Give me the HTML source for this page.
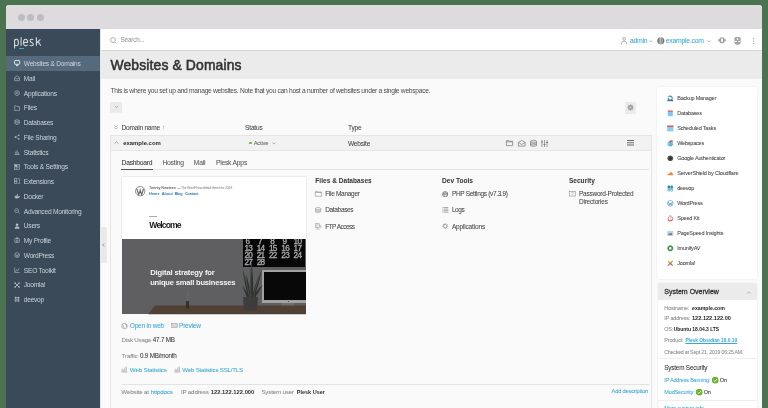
<!DOCTYPE html>
<html><head><meta charset="utf-8"><style>
html,body{margin:0;padding:0;}
body{width:768px;height:408px;overflow:hidden;position:relative;background:#4b7350;font-family:"Liberation Sans",sans-serif;}
.t{position:absolute;line-height:1;white-space:nowrap;-webkit-text-stroke:0.05px currentColor;filter:blur(0.3px);}
.r{position:absolute;}
svg{position:absolute;overflow:visible;}
</style></head><body>
<div class="r" style="left:6px;top:5px;width:756px;height:403px;background:#fafafa;border-radius:3px 3px 0 0;"></div>
<div class="r" style="left:6px;top:5px;width:756px;height:24px;background:#dddbdd;border-radius:3px 3px 0 0;"></div>
<div class="r" style="left:17.9px;top:13.5px;width:7px;height:7px;background:#bdbcbe;border-radius:50%;"></div>
<div class="r" style="left:27.2px;top:13.5px;width:7px;height:7px;background:#bdbcbe;border-radius:50%;"></div>
<div class="r" style="left:36.5px;top:13.5px;width:7px;height:7px;background:#bdbcbe;border-radius:50%;"></div>
<div class="r" style="left:6px;top:29px;width:94px;height:379px;background:#3a4a59;"></div>
<svg style="left:0;top:0;filter:blur(0.2px)" width="50" height="50" viewBox="0 0 50 50"><g fill="none" stroke="#d9dee3" stroke-width="1.05"><path d="M14.6,48.6 V39.4"/><path d="M14.6,40.5 C15.1,39.7 15.9,39.3 16.6,39.3 C17.8,39.3 18.4,40.6 18.4,42.5 C18.4,44.5 17.7,45.8 16.5,45.8 C15.8,45.8 15.1,45.4 14.6,44.7"/><path d="M21.1,37.2 V45.8"/><path d="M23.6,42.5 H27.6 C27.6,40.4 26.9,39.3 25.6,39.3 C24.3,39.3 23.5,40.6 23.5,42.6 C23.5,44.6 24.3,45.8 25.7,45.8 C26.6,45.8 27.2,45.4 27.6,44.8"/><path d="M33.1,39.9 C32.7,39.5 32.1,39.3 31.5,39.3 C30.6,39.3 30.0,39.9 30.0,40.8 C30.0,42.7 33.3,42.2 33.3,44.2 C33.3,45.2 32.6,45.8 31.5,45.8 C30.8,45.8 30.1,45.5 29.7,45.0"/><path d="M36.4,37.2 V45.8 M40.4,39.4 L36.6,43.0 M38.1,41.6 L40.8,45.8"/></g></svg>
<div class="r" style="left:18.7px;top:47.9px;width:5.1px;height:1px;background:#3fa9d0;"></div>
<div class="r" style="left:6px;top:56px;width:94px;height:15px;background:#566a7e;"></div>
<div class="t" style="left:23.80px;top:61.00px;font-size:6.642px;color:#cad2d9;letter-spacing:-0.253px;-webkit-text-stroke:0;">Websites &amp; Domains</div>
<div class="t" style="left:23.80px;top:76.00px;font-size:6.642px;color:#cad2d9;letter-spacing:-0.226px;-webkit-text-stroke:0;">Mail</div>
<div class="t" style="left:23.80px;top:91.00px;font-size:6.642px;color:#cad2d9;letter-spacing:-0.221px;-webkit-text-stroke:0;">Applications</div>
<div class="t" style="left:23.80px;top:105.00px;font-size:6.642px;color:#cad2d9;letter-spacing:-0.208px;-webkit-text-stroke:0;">Files</div>
<div class="t" style="left:23.80px;top:120.00px;font-size:6.642px;color:#cad2d9;letter-spacing:-0.261px;-webkit-text-stroke:0;">Databases</div>
<div class="t" style="left:23.80px;top:135.00px;font-size:6.642px;color:#cad2d9;letter-spacing:-0.219px;-webkit-text-stroke:0;">File Sharing</div>
<div class="t" style="left:23.80px;top:150.00px;font-size:6.642px;color:#cad2d9;letter-spacing:-0.197px;-webkit-text-stroke:0;">Statistics</div>
<div class="t" style="left:23.80px;top:164.00px;font-size:6.642px;color:#cad2d9;letter-spacing:-0.220px;-webkit-text-stroke:0;">Tools &amp; Settings</div>
<div class="t" style="left:23.80px;top:179.00px;font-size:6.642px;color:#cad2d9;letter-spacing:-0.241px;-webkit-text-stroke:0;">Extensions</div>
<div class="t" style="left:23.80px;top:194.00px;font-size:6.642px;color:#cad2d9;letter-spacing:-0.260px;-webkit-text-stroke:0;">Docker</div>
<div class="t" style="left:23.80px;top:209.00px;font-size:6.642px;color:#cad2d9;letter-spacing:-0.243px;-webkit-text-stroke:0;">Advanced Monitoring</div>
<div class="t" style="left:23.80px;top:223.00px;font-size:6.642px;color:#cad2d9;letter-spacing:-0.257px;-webkit-text-stroke:0;">Users</div>
<div class="t" style="left:23.80px;top:238.00px;font-size:6.642px;color:#cad2d9;letter-spacing:-0.219px;-webkit-text-stroke:0;">My Profile</div>
<div class="t" style="left:23.80px;top:253.00px;font-size:6.642px;color:#cad2d9;letter-spacing:-0.269px;-webkit-text-stroke:0;">WordPress</div>
<div class="t" style="left:23.80px;top:268.00px;font-size:6.642px;color:#cad2d9;letter-spacing:-0.233px;-webkit-text-stroke:0;">SEO Toolkit</div>
<div class="t" style="left:23.80px;top:282.00px;font-size:6.642px;color:#cad2d9;letter-spacing:-0.246px;-webkit-text-stroke:0;">Joomla!</div>
<div class="t" style="left:23.80px;top:297.00px;font-size:6.642px;color:#cad2d9;letter-spacing:-0.269px;-webkit-text-stroke:0;">deevop</div>
<div class="r" style="left:100px;top:29px;width:662px;height:21px;background:#ffffff;"></div>
<div class="r" style="left:100px;top:50px;width:662px;height:1px;background:#d8d8d8;"></div>
<div class="t" style="left:120.50px;top:37.00px;font-size:6.420px;color:#9a9a9a;letter-spacing:-0.187px;">Search...</div>
<svg style="left:110px;top:36.5px" width="7" height="7" viewBox="0 0 7 7"><circle cx="3" cy="3" r="2.4" fill="none" stroke="#a8a8a8" stroke-width="0.9"/><line x1="4.8" y1="4.8" x2="6.5" y2="6.5" stroke="#a8a8a8" stroke-width="0.9"/></svg>
<div class="t" style="left:629.90px;top:38.00px;font-size:6.848px;color:#3aa6d8;letter-spacing:-0.244px;">admin</div>
<div class="t" style="left:665.80px;top:38.00px;font-size:6.848px;color:#3aa6d8;letter-spacing:-0.242px;">example.com</div>
<div class="r" style="left:100px;top:51px;width:662px;height:28px;background:#ebebeb;"></div>
<div class="t" style="left:110.50px;top:59.00px;font-size:13.900px;color:#333333;letter-spacing:0.136px;-webkit-text-stroke:0.55px currentColor;filter:blur(0.2px);">Websites &amp; Domains</div>
<div class="t" style="left:110.50px;top:88.00px;font-size:6.700px;color:#4a4a4a;letter-spacing:-0.290px;-webkit-text-stroke:0;">This is where you set up and manage websites. Note that you can host a number of websites under a single webspace.</div>
<div class="r" style="left:110px;top:101.5px;width:12px;height:11.5px;background:#ebebeb;border-radius:1px;"></div>
<svg style="left:113.5px;top:105px" width="5" height="4" viewBox="0 0 5 4"><polyline points="0.8,1 2.5,2.6 4.2,1" fill="none" stroke="#9a9a9a" stroke-width="0.8"/></svg>
<div class="r" style="left:625px;top:102px;width:11px;height:11.7px;background:#ebebeb;border-radius:1px;"></div>
<svg style="left:627px;top:104.3px;filter:blur(0.2px)" width="7" height="7" viewBox="0 0 7 7"><polygon points="6.70,3.50 6.64,4.12 5.72,4.42 5.50,4.83 5.76,5.76 5.28,6.16 4.42,5.72 3.97,5.85 3.50,6.70 2.88,6.64 2.58,5.72 2.17,5.50 1.24,5.76 0.84,5.28 1.28,4.42 1.15,3.97 0.30,3.50 0.36,2.88 1.28,2.58 1.50,2.17 1.24,1.24 1.72,0.84 2.58,1.28 3.03,1.15 3.50,0.30 4.12,0.36 4.42,1.28 4.83,1.50 5.76,1.24 6.16,1.72 5.72,2.58 5.85,3.03" fill="#9c9c9c"/><circle cx="3.5" cy="3.5" r="1" fill="#d0d0d0"/></svg>
<svg style="left:113.8px;top:124.5px" width="4" height="5" viewBox="0 0 4 5"><polyline points="0.4,0.6 2,2 3.6,0.6" fill="none" stroke="#999" stroke-width="0.7"/><polyline points="0.4,2.6 2,4 3.6,2.6" fill="none" stroke="#999" stroke-width="0.7"/></svg>
<div class="t" style="left:121.60px;top:125.00px;font-size:6.581px;color:#444;letter-spacing:-0.244px;">Domain name</div>
<div class="t" style="left:162.20px;top:125.00px;font-size:5.885px;color:#3aa6d8;letter-spacing:-0.193px;">↑</div>
<div class="t" style="left:245.10px;top:125.00px;font-size:6.581px;color:#444;letter-spacing:-0.203px;">Status</div>
<div class="t" style="left:348.00px;top:125.00px;font-size:6.581px;color:#444;letter-spacing:-0.233px;">Type</div>
<div class="r" style="left:110px;top:135px;width:542px;height:273px;background:#fafafa;border:1px solid #e6e6e6;box-sizing:border-box;border-bottom:none;"></div>
<div class="r" style="left:110px;top:135px;width:542px;height:16px;background:#f2f2f2;border:1px solid #e6e6e6;box-sizing:border-box;"></div>
<svg style="left:113.5px;top:141px" width="5" height="3" viewBox="0 0 5 3"><polyline points="0.6,2.6 2.5,0.8 4.4,2.6" fill="none" stroke="#888" stroke-width="0.8"/></svg>
<div class="t" style="left:123.20px;top:141.00px;font-size:5.950px;color:#2b2b2b;font-weight:bold;-webkit-text-stroke:0;">example.com</div>
<div class="r" style="left:249px;top:141.5px;width:2.6px;height:2.6px;background:#6ab42d;border-radius:50%;"></div>
<div class="t" style="left:253.70px;top:141.00px;font-size:5.778px;color:#666;letter-spacing:-0.172px;">Active</div>
<svg style="left:271.5px;top:142px" width="4" height="3" viewBox="0 0 4 3"><polyline points="0.4,0.6 2,2 3.6,0.6" fill="none" stroke="#999" stroke-width="0.7"/></svg>
<div class="t" style="left:348.00px;top:141.00px;font-size:6.581px;color:#444;letter-spacing:-0.221px;">Website</div>
<svg style="left:505.8px;top:140px" width="7" height="6" viewBox="0 0 7 6"><path d="M0.4,0.6 H2.6 L3.2,1.3 H6.6 V5.6 H0.4 Z M0.4,1.8 H6.6" fill="none" stroke="#777" stroke-width="0.7"/></svg>
<svg style="left:517.7px;top:140px" width="7.5" height="6.5" viewBox="0 0 7.5 6.5"><path d="M0.4,2.4 L3.75,0.4 L7.1,2.4 V6.1 H0.4 Z M0.4,2.4 L3.75,4.5 L7.1,2.4" fill="none" stroke="#777" stroke-width="0.7"/></svg>
<svg style="left:529.5px;top:139.8px" width="7" height="7" viewBox="0 0 7 7"><ellipse cx="3.5" cy="1.3" rx="3" ry="1" fill="none" stroke="#777" stroke-width="0.7"/><path d="M0.5,1.3 V5.7 Q3.5,7.2 6.5,5.7 V1.3 M0.5,2.8 Q3.5,4.3 6.5,2.8 M0.5,4.3 Q3.5,5.8 6.5,4.3" fill="none" stroke="#777" stroke-width="0.7"/></svg>
<svg style="left:541px;top:139.8px" width="7" height="7" viewBox="0 0 7 7"><path d="M1,0 V7 M3.5,0 V7 M6,0 V7" stroke="#777" stroke-width="0.7"/><path d="M0,2 H2 M2.5,4.5 H4.5 M5,2.5 H7" stroke="#777" stroke-width="0.9"/></svg>
<svg style="left:627px;top:140px" width="7" height="5.5" viewBox="0 0 7 5.5"><path d="M0,0.5 H7 M0,2.75 H7 M0,5 H7" stroke="#555" stroke-width="0.9"/></svg>
<div class="t" style="left:121.60px;top:160.00px;font-size:6.741px;color:#333;letter-spacing:-0.240px;">Dashboard</div>
<div class="t" style="left:162.40px;top:160.00px;font-size:6.741px;color:#555;letter-spacing:-0.214px;">Hosting</div>
<div class="t" style="left:193.80px;top:160.00px;font-size:6.741px;color:#555;letter-spacing:-0.202px;">Mail</div>
<div class="t" style="left:215.90px;top:160.00px;font-size:6.741px;color:#555;letter-spacing:-0.218px;">Plesk Apps</div>
<div class="r" style="left:121px;top:169px;width:527.5px;height:1px;background:#e3e3e3;"></div>
<div class="r" style="left:121.3px;top:168.6px;width:31.3px;height:1.6px;background:#555555;"></div>
<div class="r" style="left:122px;top:177px;width:184px;height:62px;background:#ffffff;box-shadow:0 0 0 0.5px #e0e0e0;"></div>
<div class="r" style="left:122px;top:239px;width:184px;height:75.2px;background:#5f5f61;"></div>
<svg style="left:135px;top:185.7px" width="10.4" height="10.4" viewBox="0 0 14 14"><circle cx="7" cy="7" r="6.3" fill="none" stroke="#666" stroke-width="1"/><path d="M2.6,4.6 L5,11.5 L7,6.2 L9,11.5 L11.4,4.6" fill="none" stroke="#666" stroke-width="1.5"/><path d="M1.9,4.4 H4.4 M5.9,4.4 H8.1 M9.6,4.4 H12.1" stroke="#666" stroke-width="0.8"/></svg>
<div class="t" style="left:149.00px;top:187.00px;font-size:3.700px;color:#333;letter-spacing:-0.051px;filter:blur(0.3px);-webkit-text-stroke:0;">Twenty Nineteen</div>
<div class="t" style="left:177.00px;top:187.00px;font-size:3.600px;color:#999;letter-spacing:-0.303px;font-family:"Liberation Serif",serif;filter:blur(0.3px);-webkit-text-stroke:0;">— The WordPress default theme for 2019</div>
<div class="t" style="left:149.00px;top:193.00px;font-size:3.800px;color:#2a7ab0;font-weight:bold;-webkit-text-stroke:0;letter-spacing:0.011px;filter:blur(0.3px);">Home</div>
<div class="t" style="left:161.80px;top:193.00px;font-size:3.800px;color:#2a7ab0;font-weight:bold;-webkit-text-stroke:0;letter-spacing:-0.015px;filter:blur(0.3px);">About</div>
<div class="t" style="left:174.70px;top:193.00px;font-size:3.800px;color:#2a7ab0;font-weight:bold;-webkit-text-stroke:0;letter-spacing:-0.210px;filter:blur(0.3px);">Blog</div>
<div class="t" style="left:184.90px;top:193.00px;font-size:3.800px;color:#2a7ab0;font-weight:bold;-webkit-text-stroke:0;letter-spacing:-0.078px;filter:blur(0.3px);">Contact</div>
<div class="r" style="left:149.3px;top:216px;width:7.7px;height:0.7px;background:#aaaaaa;"></div>
<div class="t" style="left:149.30px;top:221.00px;font-size:8.600px;color:#1a1a1a;font-weight:bold;-webkit-text-stroke:0;letter-spacing:-0.871px;filter:blur(0.3px);">Welcome</div>
<div class="t" style="left:150.20px;top:269.00px;font-size:7.600px;color:#f4f4f4;font-weight:bold;-webkit-text-stroke:0;letter-spacing:-0.132px;filter:blur(0.3px);">Digital strategy for</div>
<div class="t" style="left:150.20px;top:279.00px;font-size:7.600px;color:#f4f4f4;font-weight:bold;-webkit-text-stroke:0;letter-spacing:-0.211px;filter:blur(0.3px);">unique small businesses</div>
<div style="position:absolute;left:243px;top:239px;width:61.6px;height:28px;overflow:hidden;background:#070707;"><div class="t" style="left:2.60px;top:-1.34px;font-size:8.2px;letter-spacing:-0.7px;color:#a8a8a8;-webkit-text-stroke:0.35px currentColor;filter:blur(0.35px);">6</div><div class="t" style="left:14.90px;top:-1.34px;font-size:8.2px;letter-spacing:-0.7px;color:#a8a8a8;-webkit-text-stroke:0.35px currentColor;filter:blur(0.35px);">7</div><div class="t" style="left:27.20px;top:-1.34px;font-size:8.2px;letter-spacing:-0.7px;color:#a8a8a8;-webkit-text-stroke:0.35px currentColor;filter:blur(0.35px);">8</div><div class="t" style="left:39.50px;top:-1.34px;font-size:8.2px;letter-spacing:-0.7px;color:#a8a8a8;-webkit-text-stroke:0.35px currentColor;filter:blur(0.35px);">9</div><div class="t" style="left:50.60px;top:-1.34px;font-size:8.2px;letter-spacing:-0.7px;color:#a8a8a8;-webkit-text-stroke:0.35px currentColor;filter:blur(0.35px);">10</div><div class="t" style="left:1.40px;top:5.86px;font-size:8.2px;letter-spacing:-0.7px;color:#a8a8a8;-webkit-text-stroke:0.35px currentColor;filter:blur(0.35px);">13</div><div class="t" style="left:13.70px;top:5.86px;font-size:8.2px;letter-spacing:-0.7px;color:#a8a8a8;-webkit-text-stroke:0.35px currentColor;filter:blur(0.35px);">14</div><div class="t" style="left:26.00px;top:5.86px;font-size:8.2px;letter-spacing:-0.7px;color:#a8a8a8;-webkit-text-stroke:0.35px currentColor;filter:blur(0.35px);">15</div><div class="t" style="left:38.30px;top:5.86px;font-size:8.2px;letter-spacing:-0.7px;color:#a8a8a8;-webkit-text-stroke:0.35px currentColor;filter:blur(0.35px);">16</div><div class="t" style="left:50.60px;top:5.86px;font-size:8.2px;letter-spacing:-0.7px;color:#a8a8a8;-webkit-text-stroke:0.35px currentColor;filter:blur(0.35px);">17</div><div class="t" style="left:1.40px;top:13.06px;font-size:8.2px;letter-spacing:-0.7px;color:#a8a8a8;-webkit-text-stroke:0.35px currentColor;filter:blur(0.35px);">20</div><div class="t" style="left:13.70px;top:13.06px;font-size:8.2px;letter-spacing:-0.7px;color:#a8a8a8;-webkit-text-stroke:0.35px currentColor;filter:blur(0.35px);">21</div><div class="t" style="left:26.00px;top:13.06px;font-size:8.2px;letter-spacing:-0.7px;color:#a8a8a8;-webkit-text-stroke:0.35px currentColor;filter:blur(0.35px);">22</div><div class="t" style="left:38.30px;top:13.06px;font-size:8.2px;letter-spacing:-0.7px;color:#a8a8a8;-webkit-text-stroke:0.35px currentColor;filter:blur(0.35px);">23</div><div class="t" style="left:50.60px;top:13.06px;font-size:8.2px;letter-spacing:-0.7px;color:#a8a8a8;-webkit-text-stroke:0.35px currentColor;filter:blur(0.35px);">24</div><div class="t" style="left:1.40px;top:20.26px;font-size:8.2px;letter-spacing:-0.7px;color:#a8a8a8;-webkit-text-stroke:0.35px currentColor;filter:blur(0.35px);">27</div><div class="t" style="left:13.70px;top:20.26px;font-size:8.2px;letter-spacing:-0.7px;color:#a8a8a8;-webkit-text-stroke:0.35px currentColor;filter:blur(0.35px);">28</div></div>
<div class="r" style="left:262px;top:270px;width:43.5px;height:33.2px;background:#a2a2a2;"></div>
<div class="r" style="left:264px;top:272px;width:41.5px;height:27.7px;background:#080808;"></div>
<div class="r" style="left:287.6px;top:301px;width:1.3px;height:1.3px;background:#333;border-radius:50%;"></div>
<div class="r" style="left:281px;top:303.2px;width:13px;height:8px;background:#6f6f6f;"></div>
<div class="r" style="left:269.5px;top:310.8px;width:26px;height:2.4px;background:#8a8a8a;"></div>
<svg style="left:122px;top:305px" width="184" height="9.2" viewBox="0 0 184 9.2"><polygon points="33,0.4 184,0.4 184,9.2 26,9.2" fill="#4f4136"/></svg>
<svg style="left:242px;top:260px" width="22" height="52" viewBox="0 0 22 52"><g fill="#2f332e"><path d="M6,38 C4,28 1.5,18 0.5,8 C3.5,16 6.5,27 9,38 Z"/><path d="M8,38 C7.5,26 8,13 9.5,2 C11,13 11.5,26 11,38 Z"/><path d="M10,38 C12,28 15,19 20,9 C18,19 15,29 12.5,38 Z"/><path d="M5,38 C3.5,33 1.5,29 0,25 C3,29 5.5,33 7.5,38 Z"/><path d="M11,38 C13,33 16,29 21,25 C18,30 15,34 13,38 Z"/><path d="M7,38 C5.5,30 4.5,22 4.5,14 C6.5,22 8,30 9,38 Z"/></g><g stroke="#777" stroke-width="0.35" fill="none"><path d="M9.5,3 C8.7,14 8.5,26 8.8,37"/><path d="M1,9 C3,17 5.5,27 7.5,37"/><path d="M19.5,10 C16,19 13.5,28 11.5,37"/></g><path d="M1,37 H16 L15,50.3 H2 Z" fill="#3d3d3d"/></svg>
<svg style="left:185px;top:289px" width="5" height="21" viewBox="0 0 5 21"><path d="M2.2,0 L2.5,12 M3.5,1 L2.8,12" stroke="#777" stroke-width="0.3"/><path d="M1.2,12 Q0.8,16 1,19.5 H4 Q4.3,16 3.8,12 Z" fill="#3a2e24"/></svg>
<div class="t" style="left:315.30px;top:178.00px;font-size:6.600px;color:#333;font-weight:bold;-webkit-text-stroke:0;">Files &amp; Databases</div>
<div class="t" style="left:442.00px;top:178.00px;font-size:6.600px;color:#333;font-weight:bold;-webkit-text-stroke:0;">Dev Tools</div>
<div class="t" style="left:568.90px;top:178.00px;font-size:6.600px;color:#333;font-weight:bold;-webkit-text-stroke:0;">Security</div>
<div class="t" style="left:325.20px;top:191.00px;font-size:6.500px;color:#444;letter-spacing:-0.294px;">File Manager</div>
<div class="t" style="left:325.20px;top:207.00px;font-size:6.500px;color:#444;letter-spacing:-0.330px;">Databases</div>
<div class="t" style="left:325.20px;top:224.00px;font-size:6.500px;color:#444;letter-spacing:-0.536px;">FTP Access</div>
<div class="t" style="left:451.90px;top:191.00px;font-size:6.500px;color:#444;letter-spacing:-0.313px;">PHP Settings (v7.3.9)</div>
<div class="t" style="left:451.90px;top:207.00px;font-size:6.500px;color:#444;letter-spacing:-0.448px;">Logs</div>
<div class="t" style="left:451.90px;top:224.00px;font-size:6.500px;color:#444;letter-spacing:-0.162px;">Applications</div>
<div class="t" style="left:578.90px;top:191.00px;font-size:6.474px;color:#444;letter-spacing:-0.212px;">Password-Protected</div>
<div class="t" style="left:578.90px;top:199.00px;font-size:6.474px;color:#444;letter-spacing:-0.184px;">Directories</div>
<div class="t" style="left:129.80px;top:323.00px;font-size:6.527px;color:#3aa6d8;letter-spacing:-0.218px;">Open in web</div>
<div class="t" style="left:179.00px;top:323.00px;font-size:6.527px;color:#3aa6d8;letter-spacing:-0.217px;">Preview</div>
<div class="t" style="left:121.60px;top:337.00px;font-size:6.206px;color:#888;letter-spacing:-0.208px;">Disk Usage</div>
<div class="t" style="left:152.80px;top:337.00px;font-size:6.313px;color:#333;letter-spacing:-0.220px;">47.7 MB</div>
<div class="t" style="left:121.60px;top:353.00px;font-size:6.206px;color:#888;letter-spacing:-0.158px;">Traffic</div>
<div class="t" style="left:140.00px;top:353.00px;font-size:6.313px;color:#333;letter-spacing:-0.214px;">0.9 MB/month</div>
<div class="t" style="left:129.80px;top:367.00px;font-size:6.260px;color:#3aa6d8;letter-spacing:-0.185px;">Web Statistics</div>
<div class="t" style="left:182.20px;top:367.00px;font-size:6.153px;color:#3aa6d8;letter-spacing:-0.194px;">Web Statistics SSL/TLS</div>
<div class="r" style="left:121.5px;top:383.8px;width:527px;height:0.8px;background:#e3e3e3;"></div>
<div class="t" style="left:121.30px;top:389.00px;font-size:6.260px;color:#888;letter-spacing:-0.193px;">Website at</div>
<div class="t" style="left:150.70px;top:389.00px;font-size:6.260px;color:#3aa6d8;letter-spacing:-0.193px;">httpdocs</div>
<div class="t" style="left:180.90px;top:389.00px;font-size:6.260px;color:#888;letter-spacing:-0.195px;">IP address</div>
<div class="t" style="left:210.80px;top:390.00px;font-size:5.800px;color:#333;font-weight:bold;-webkit-text-stroke:0;">122.122.122.000</div>
<div class="t" style="left:261.40px;top:389.00px;font-size:6.260px;color:#888;letter-spacing:-0.207px;">System user</div>
<div class="t" style="left:296.80px;top:390.00px;font-size:5.500px;color:#333;font-weight:bold;-webkit-text-stroke:0;">Plesk User</div>
<div class="t" style="left:611.60px;top:389.00px;font-size:5.671px;color:#3aa6d8;letter-spacing:-0.170px;">Add description</div>
<div class="r" style="left:652px;top:79px;width:110px;height:329px;background:#fafafa;"></div>
<div class="r" style="left:657px;top:87px;width:100px;height:192px;background:#ffffff;border-radius:2px;box-shadow:0 0 0 0.5px #eeeeee;"></div>
<div class="t" style="left:677.20px;top:96.00px;font-size:5.511px;color:#444;letter-spacing:-0.195px;">Backup Manager</div>
<div class="t" style="left:677.20px;top:111.00px;font-size:5.511px;color:#444;letter-spacing:-0.191px;">Databases</div>
<div class="t" style="left:677.20px;top:126.00px;font-size:5.511px;color:#444;letter-spacing:-0.181px;">Scheduled Tasks</div>
<div class="t" style="left:677.20px;top:141.00px;font-size:5.511px;color:#444;letter-spacing:-0.209px;">Webspaces</div>
<div class="t" style="left:677.20px;top:156.00px;font-size:5.511px;color:#444;letter-spacing:-0.168px;">Google Authenticator</div>
<div class="t" style="left:677.20px;top:171.00px;font-size:5.511px;color:#444;letter-spacing:-0.165px;">ServerShield by Cloudflare</div>
<div class="t" style="left:677.20px;top:186.00px;font-size:5.511px;color:#444;letter-spacing:-0.197px;">deevop</div>
<div class="t" style="left:677.20px;top:201.00px;font-size:5.511px;color:#444;letter-spacing:-0.197px;">WordPress</div>
<div class="t" style="left:677.20px;top:216.00px;font-size:5.511px;color:#444;letter-spacing:-0.174px;">Speed Kit</div>
<div class="t" style="left:677.20px;top:231.00px;font-size:5.511px;color:#444;letter-spacing:-0.179px;">PageSpeed Insights</div>
<div class="t" style="left:677.20px;top:246.00px;font-size:5.511px;color:#444;letter-spacing:-0.180px;">ImunifyAV</div>
<div class="t" style="left:677.20px;top:261.00px;font-size:5.511px;color:#444;letter-spacing:-0.180px;">Joomla!</div>
<div class="r" style="left:657.5px;top:283px;width:99.5px;height:125px;background:#ffffff;border-radius:2px;box-shadow:0 0 0 0.5px #eeeeee;"></div>
<div class="r" style="left:657.5px;top:283px;width:99.5px;height:17.3px;background:#ebebeb;border-radius:2px 2px 0 0;"></div>
<div class="t" style="left:664.30px;top:288.00px;font-size:7.000px;color:#333;letter-spacing:0.010px;-webkit-text-stroke:0.3px currentColor;">System Overview</div>
<svg style="left:747px;top:291px" width="4" height="3" viewBox="0 0 4 3"><polyline points="0.4,2.4 2,0.8 3.6,2.4" fill="none" stroke="#888" stroke-width="0.6"/></svg>
<div class="t" style="left:664.30px;top:306.00px;font-size:5.511px;color:#888;letter-spacing:-0.194px;">Hostname:</div>
<div class="t" style="left:692.00px;top:306.00px;font-size:5.200px;color:#222;font-weight:bold;-webkit-text-stroke:0;">example.com</div>
<div class="t" style="left:664.30px;top:316.00px;font-size:5.511px;color:#888;letter-spacing:-0.165px;">IP address:</div>
<div class="t" style="left:692.00px;top:316.00px;font-size:5.600px;color:#222;font-weight:bold;-webkit-text-stroke:0;">122.122.122.00</div>
<div class="t" style="left:664.30px;top:327.00px;font-size:5.511px;color:#888;letter-spacing:-0.207px;">OS:</div>
<div class="t" style="left:673.70px;top:328.00px;font-size:4.950px;color:#222;font-weight:bold;-webkit-text-stroke:0;">Ubuntu 18.04.3 LTS</div>
<div class="t" style="left:664.30px;top:338.00px;font-size:5.511px;color:#888;letter-spacing:-0.168px;">Product:</div>
<div class="t" style="left:685.40px;top:339.00px;font-size:4.800px;color:#3aa6d8;font-weight:bold;-webkit-text-stroke:0;text-decoration:underline;">Plesk Obsidian 18.0.19</div>
<div class="t" style="left:664.30px;top:350.00px;font-size:5.189px;color:#888;letter-spacing:-0.163px;">Checked at Sept 21, 2019 06:25 AM.</div>
<div class="r" style="left:657.5px;top:358px;width:99.5px;height:0.7px;background:#eeeeee;"></div>
<div class="t" style="left:664.30px;top:365.00px;font-size:6.367px;color:#333;letter-spacing:-0.201px;">System Security</div>
<div class="t" style="left:664.30px;top:378.00px;font-size:5.457px;color:#3aa6d8;letter-spacing:-0.170px;">IP Address Banning:</div>
<div class="r" style="left:711.9px;top:376.8px;width:6.6px;height:6.6px;background:#6ab42d;border-radius:50%;"></div>
<div class="t" style="left:719.80px;top:378.00px;font-size:5.671px;color:#333;letter-spacing:-0.247px;">On</div>
<div class="t" style="left:664.30px;top:390.00px;font-size:5.564px;color:#3aa6d8;letter-spacing:-0.177px;">ModSecurity:</div>
<div class="r" style="left:695.8px;top:388.6px;width:6.6px;height:6.6px;background:#6ab42d;border-radius:50%;"></div>
<div class="t" style="left:703.70px;top:390.00px;font-size:5.671px;color:#333;letter-spacing:-0.247px;">On</div>
<div class="r" style="left:657.5px;top:399.6px;width:99.5px;height:0.7px;background:#eeeeee;"></div>
<div class="t" style="left:664.30px;top:406.00px;font-size:5.564px;color:#3aa6d8;letter-spacing:-0.173px;">More system info</div>
<svg style="left:13.8px;top:60.400000000000006px;filter:blur(0.2px);" width="6.2" height="6.2" viewBox="0 0 14 14"><rect x="1.3" y="1.3" width="11.4" height="8.4" rx="1.2" fill="none" stroke="#eef2f5" stroke-width="2"/><path d="M4.5,12.8 H9.5 M7,10 V12.8" stroke="#eef2f5" stroke-width="1.8"/></svg>
<svg style="left:13.8px;top:75.15px;filter:blur(0.2px);" width="6.2" height="6.2" viewBox="0 0 14 14"><path d="M1.5,6 L7,1.5 L12.5,6 V12.8 H1.5 Z M1.5,6 L7,9.5 L12.5,6" fill="none" stroke="#b4bec8" stroke-width="1.4"/></svg>
<svg style="left:13.8px;top:89.9px;filter:blur(0.2px);" width="6.2" height="6.2" viewBox="0 0 14 14"><circle cx="7" cy="7" r="5.3" fill="none" stroke="#b4bec8" stroke-width="1.4"/><circle cx="7" cy="7" r="2" fill="none" stroke="#b4bec8" stroke-width="1.2"/></svg>
<svg style="left:13.8px;top:104.65px;filter:blur(0.2px);" width="6.2" height="6.2" viewBox="0 0 14 14"><path d="M1.5,2 H5.5 L6.8,3.8 H12.5 V12.3 H1.5 Z" fill="none" stroke="#b4bec8" stroke-width="1.4"/></svg>
<svg style="left:13.8px;top:119.4px;filter:blur(0.2px);" width="6.2" height="6.2" viewBox="0 0 14 14"><path d="M2,3.5 L7,1.2 L12,3.5 L7,5.8 Z M2,7 L7,9.3 L12,7 M2,10.5 L7,12.8 L12,10.5 M2,3.5 V10.5 M12,3.5 V10.5" fill="none" stroke="#b4bec8" stroke-width="1.4"/></svg>
<svg style="left:13.8px;top:134.14999999999998px;filter:blur(0.2px);" width="6.2" height="6.2" viewBox="0 0 14 14"><circle cx="11" cy="2.8" r="1.8" fill="#b4bec8"/><circle cx="3" cy="7" r="1.8" fill="#b4bec8"/><circle cx="11" cy="11.2" r="1.8" fill="#b4bec8"/><path d="M11,2.8 L3,7 L11,11.2" fill="none" stroke="#b4bec8" stroke-width="1.1"/></svg>
<svg style="left:13.8px;top:148.89999999999998px;filter:blur(0.2px);" width="6.2" height="6.2" viewBox="0 0 14 14"><path d="M1.5,12.5 H12.5 M4,11 V6 M7,11 V3 M10,11 V7.5" fill="none" stroke="#b4bec8" stroke-width="1.6"/></svg>
<svg style="left:13.8px;top:163.64999999999998px;filter:blur(0.2px);" width="6.2" height="6.2" viewBox="0 0 14 14"><rect x="1.5" y="1.5" width="11" height="11" fill="none" stroke="#b4bec8" stroke-width="1.3"/><path d="M3.5,4.5 H10.5 M3.5,7 H10.5 M3.5,9.5 H8" stroke="#b4bec8" stroke-width="1.3"/><rect x="2" y="2" width="5" height="4" fill="#b4bec8"/></svg>
<svg style="left:13.8px;top:178.39999999999998px;filter:blur(0.2px);" width="6.2" height="6.2" viewBox="0 0 14 14"><rect x="1.5" y="1.5" width="5" height="5" fill="none" stroke="#b4bec8" stroke-width="1.3"/><rect x="1.5" y="8" width="5" height="4.5" fill="none" stroke="#b4bec8" stroke-width="1.3"/><path d="M8.5,1.5 H12.5 V12.5 H8.5" fill="none" stroke="#b4bec8" stroke-width="1.3"/></svg>
<svg style="left:13.8px;top:193.14999999999998px;filter:blur(0.2px);" width="6.2" height="6.2" viewBox="0 0 14 14"><path d="M1,7.5 H11 C12,6.5 12.8,6.5 13.5,7 C12.5,11 9,12.5 5.5,12.5 C2.5,12.5 1.2,10 1,7.5 Z" fill="#b4bec8"/><rect x="4" y="5" width="2" height="2" fill="#b4bec8"/><rect x="6.5" y="5" width="2" height="2" fill="#b4bec8"/><rect x="6.5" y="2.5" width="2" height="2" fill="#b4bec8"/></svg>
<svg style="left:13.8px;top:207.89999999999998px;filter:blur(0.2px);" width="6.2" height="6.2" viewBox="0 0 14 14"><circle cx="6" cy="6" r="4.5" fill="none" stroke="#b4bec8" stroke-width="1.3"/><path d="M9.3,9.3 L13,13 M3.5,7 L5,5 L6.5,6.5 L8.5,4.5" fill="none" stroke="#b4bec8" stroke-width="1.2"/></svg>
<svg style="left:13.8px;top:222.64999999999998px;filter:blur(0.2px);" width="6.2" height="6.2" viewBox="0 0 14 14"><circle cx="7" cy="4" r="3" fill="#b4bec8"/><path d="M1.5,13 C1.5,9 3.5,7.8 7,7.8 C10.5,7.8 12.5,9 12.5,13 Z" fill="#b4bec8"/></svg>
<svg style="left:13.8px;top:237.39999999999998px;filter:blur(0.2px);" width="6.2" height="6.2" viewBox="0 0 14 14"><rect x="1.8" y="3.5" width="10.4" height="9" rx="1.5" fill="none" stroke="#b4bec8" stroke-width="1.3"/><path d="M5,1.5 H9 V4.5 H5 Z M4,8 H10 M4,10.3 H10" fill="none" stroke="#b4bec8" stroke-width="1.2"/></svg>
<svg style="left:13.8px;top:252.14999999999998px;filter:blur(0.2px);" width="6.2" height="6.2" viewBox="0 0 14 14"><circle cx="7" cy="7" r="5.5" fill="none" stroke="#b4bec8" stroke-width="1.3"/><path d="M3.5,4.5 L5.5,10.5 L7,6.5 L8.5,10.5 L10.5,4.5" fill="none" stroke="#b4bec8" stroke-width="1.1"/></svg>
<svg style="left:13.8px;top:266.9px;filter:blur(0.2px);" width="6.2" height="6.2" viewBox="0 0 14 14"><path d="M1.5,1 V12.5 H13 M3.5,11 L6,6 L8.5,8.5 L12,2.5" fill="none" stroke="#b4bec8" stroke-width="1.3"/></svg>
<svg style="left:13.8px;top:281.65px;filter:blur(0.2px);" width="6.2" height="6.2" viewBox="0 0 14 14"><path d="M2.5,2.5 L11.5,11.5 M11.5,2.5 L2.5,11.5" stroke="#b4bec8" stroke-width="2.2"/><circle cx="2.5" cy="2.5" r="1.8" fill="#b4bec8"/><circle cx="11.5" cy="2.5" r="1.8" fill="#b4bec8"/><circle cx="2.5" cy="11.5" r="1.8" fill="#b4bec8"/><circle cx="11.5" cy="11.5" r="1.8" fill="#b4bec8"/></svg>
<svg style="left:13.8px;top:296.4px;filter:blur(0.2px);" width="6.2" height="6.2" viewBox="0 0 14 14"><circle cx="4" cy="4" r="2.5" fill="#b4bec8"/><circle cx="10" cy="4" r="2.5" fill="#b4bec8"/><path d="M1.5,8.5 H12.5 M4,8.5 V12.5 M10,8.5 V12.5" stroke="#b4bec8" stroke-width="1.4" fill="none"/><circle cx="4" cy="11" r="1.8" fill="none" stroke="#b4bec8" stroke-width="1.2"/><circle cx="10" cy="11" r="1.8" fill="none" stroke="#b4bec8" stroke-width="1.2"/></svg>
<svg style="left:620.9px;top:36.8px;" width="6.2" height="7.7" viewBox="0 0 14 17.4"><circle cx="7" cy="4.2" r="3.2" fill="none" stroke="#8a8a8a" stroke-width="1.5"/><path d="M1.2,16.5 C1.2,11 3.5,9.2 7,9.2 C10.5,9.2 12.8,11 12.8,16.5" fill="none" stroke="#8a8a8a" stroke-width="1.5"/></svg>
<svg style="left:649.4px;top:40px;" width="3.6" height="2.4" viewBox="0 0 3.6 2.4"><polyline points="0.5,0.5 1.8,1.9 3.1,0.5" fill="none" stroke="#8a8a8a" stroke-width="0.7"/></svg>
<svg style="left:656.8px;top:37px;" width="7.6" height="7.6" viewBox="0 0 14 14"><circle cx="7" cy="7" r="6.6" fill="#7a7a7a"/><path d="M7,0.5 V13.5" stroke="#fff" stroke-width="1.2"/><ellipse cx="7" cy="7" rx="3" ry="6.6" fill="none" stroke="#ddd" stroke-width="0.8"/></svg>
<svg style="left:706.5px;top:40px;" width="3.6" height="2.4" viewBox="0 0 3.6 2.4"><polyline points="0.5,0.5 1.8,1.9 3.1,0.5" fill="none" stroke="#8a8a8a" stroke-width="0.7"/></svg>
<svg style="left:718px;top:37.3px;" width="8" height="6.5" viewBox="0 0 16 13"><rect x="0.3" y="4.5" width="3" height="4" rx="1" fill="#a0a0a0"/><rect x="12.7" y="4.5" width="3" height="4" rx="1" fill="#a0a0a0"/><ellipse cx="8" cy="6.5" rx="5.6" ry="6.2" fill="#a0a0a0"/><rect x="6" y="3.2" width="4" height="6.4" rx="0.8" fill="#fff"/></svg>
<svg style="left:734px;top:37px;" width="7.1" height="7.8" viewBox="0 0 14 15.5"><path d="M1,3 C1,0.5 3,0 7,0 C11,0 13,0.5 13,3 V11 C13,14 10.5,15.5 7,15.5 C3.5,15.5 1,14 1,11 Z" fill="#a0a0a0"/><rect x="5.6" y="2" width="2.8" height="3.6" fill="#fff"/><ellipse cx="4" cy="9" rx="2.2" ry="1.3" fill="#fff"/><ellipse cx="10" cy="9" rx="2.2" ry="1.3" fill="#fff"/></svg>
<svg style="left:752.6px;top:38px;" width="1.4" height="6" viewBox="0 0 1.4 6"><circle cx="0.7" cy="0.7" r="0.6" fill="#8a8a8a"/><circle cx="0.7" cy="3" r="0.6" fill="#8a8a8a"/><circle cx="0.7" cy="5.3" r="0.6" fill="#8a8a8a"/></svg>
<svg style="left:315px;top:191px;" width="6.8" height="5.7" viewBox="0 0 14 11.5"><path d="M0.7,0.7 H5 L6.2,2 H13.3 V10.8 H0.7 Z M0.7,3 H13.3" fill="none" stroke="#8c8c8c" stroke-width="1.2"/></svg>
<svg style="left:315.2px;top:206.6px;" width="6.2" height="6.4" viewBox="0 0 14 14"><ellipse cx="7" cy="3" rx="5.8" ry="2.2" fill="none" stroke="#8c8c8c" stroke-width="1.2"/><path d="M1.2,3 V11 Q7,15 12.8,11 V3 M1.2,6 Q7,9.5 12.8,6 M1.2,8.8 Q7,12.3 12.8,8.8" fill="none" stroke="#8c8c8c" stroke-width="1.2"/></svg>
<svg style="left:315.2px;top:223px;" width="6.2" height="6.8" viewBox="0 0 14 14"><rect x="1" y="1" width="9.5" height="8" fill="none" stroke="#8c8c8c" stroke-width="1.2"/><path d="M3,3.5 H8 M3,6 H6.5 M5.5,9 V12 M1,13 H11 M11,5 H13 V11" fill="none" stroke="#8c8c8c" stroke-width="1.1"/></svg>
<svg style="left:442.2px;top:190.6px;" width="6.4" height="6.4" viewBox="0 0 14 14"><circle cx="7" cy="7" r="6.2" fill="#7a7a7a"/><path d="M3,4 H11 M4,6.5 V11 M10,6.5 V11 M7,4 V9" stroke="#fafafa" stroke-width="1.2"/><rect x="5.5" y="9" width="3" height="3" fill="#fafafa"/></svg>
<svg style="left:442.2px;top:207px;" width="6.6" height="5.8" viewBox="0 0 14 12"><path d="M0.5,1 H1.8 M3.2,1 H13.5 M0.5,4.3 H1.8 M3.2,4.3 H13.5 M0.5,7.6 H1.8 M3.2,7.6 H13.5 M0.5,10.9 H1.8 M3.2,10.9 H13.5" stroke="#777" stroke-width="1.3"/></svg>
<svg style="left:442.2px;top:222.8px;" width="6.4" height="6.4" viewBox="0 0 14 14"><circle cx="7" cy="7" r="3.8" fill="none" stroke="#8c8c8c" stroke-width="1.6"/><path d="M11.20,7.00 L13.30,7.00 M9.97,9.97 L11.45,11.45 M7.00,11.20 L7.00,13.30 M4.03,9.97 L2.55,11.45 M2.80,7.00 L0.70,7.00 M4.03,4.03 L2.55,2.55 M7.00,2.80 L7.00,0.70 M9.97,4.03 L11.45,2.55 " stroke="#8c8c8c" stroke-width="2"/></svg>
<svg style="left:568.9px;top:191.3px;" width="7" height="5.4" viewBox="0 0 14 11"><rect x="0.7" y="0.7" width="12.6" height="9.6" fill="none" stroke="#8c8c8c" stroke-width="1.2"/><path d="M5,3.5 Q7,1.8 8.6,3.4 Q9.5,5 7,6.5 L5.5,8.5" fill="none" stroke="#8c8c8c" stroke-width="1.1"/></svg>
<svg style="left:121.25px;top:322.8px;" width="7" height="6.2" viewBox="0 0 14 13"><circle cx="7" cy="6.5" r="5.8" fill="none" stroke="#888" stroke-width="1.2"/><path d="M3,3 Q5,5 4,7 Q6.5,8 6,11 M8,1.5 Q9,4 11.5,4.5 Q10,7.5 12,9" fill="none" stroke="#888" stroke-width="1.2"/></svg>
<svg style="left:170.5px;top:323.3px;" width="7" height="5" viewBox="0 0 14 10"><rect x="0.6" y="0.6" width="12.8" height="8.8" fill="none" stroke="#8a8a8a" stroke-width="1"/><path d="M2.5,3.2 H6.5 M2.5,5.2 H6.5 M2.5,7.2 H6.5 M8,3.2 H11.5 V7.2 H8 Z" fill="none" stroke="#8a8a8a" stroke-width="0.8"/></svg>
<svg style="left:121.25px;top:366.2px;" width="6.4" height="6" viewBox="0 0 14 13"><path d="M1,13 H14 M2.5,12 V6 M5.5,12 V8 M8.5,12 V3 M11.5,12 V1" stroke="#b0b0b0" stroke-width="2"/></svg>
<svg style="left:174.4px;top:366.2px;" width="6.4" height="6" viewBox="0 0 14 13"><path d="M1,13 H14 M2.5,12 V6 M5.5,12 V8 M8.5,12 V3 M11.5,12 V1" stroke="#b0b0b0" stroke-width="2"/></svg>
<div class="r" style="left:100px;top:29px;width:1px;height:379px;background:#e3e7ea;"></div>
<div class="r" style="left:100px;top:226.5px;width:6.8px;height:36px;background:#e9e9e9;border-radius:0 2px 2px 0;"></div>
<svg style="left:101.8px;top:242.5px;" width="2.6" height="4" viewBox="0 0 2.6 4"><polyline points="2.2,0.4 0.6,2 2.2,3.6" fill="none" stroke="#777" stroke-width="0.7"/></svg>
<svg style="left:711.9000000000001px;top:376.8px;" width="6.6" height="6.6" viewBox="0 0 14 14"><circle cx="7" cy="7" r="6.8" fill="#6bb32e"/><polyline points="3.6,7.2 6,9.5 10.4,4.6" fill="none" stroke="#fff" stroke-width="1.8"/></svg>
<svg style="left:695.8000000000001px;top:388.59999999999997px;" width="6.6" height="6.6" viewBox="0 0 14 14"><circle cx="7" cy="7" r="6.8" fill="#6bb32e"/><polyline points="3.6,7.2 6,9.5 10.4,4.6" fill="none" stroke="#fff" stroke-width="1.8"/></svg>
<svg style="left:667.4px;top:94.9px;filter:blur(0.15px);" width="6.6" height="6.6" viewBox="0 0 14 14"><rect x="1" y="10" width="12" height="3.2" fill="#5a6670"/><path d="M2.5,6.5 A4.3,4.3 0 1 0 5,2.8" fill="none" stroke="#2e86c8" stroke-width="2.2"/><polygon points="3.2,0.8 6.6,3.2 3,5.2" fill="#2e86c8"/></svg>
<svg style="left:667.4px;top:109.9px;filter:blur(0.15px);" width="6.6" height="6.6" viewBox="0 0 14 14"><rect x="1.5" y="2.5" width="11" height="11" rx="1.5" fill="#7fcaf0"/><rect x="1.5" y="0.8" width="11" height="3" rx="1.2" fill="#e8553f"/></svg>
<svg style="left:667.4px;top:124.89999999999999px;filter:blur(0.15px);" width="6.6" height="6.6" viewBox="0 0 14 14"><rect x="0.5" y="2" width="13" height="11.5" fill="#7fcaf0"/><rect x="0.5" y="1" width="13" height="3" fill="#e8553f"/><path d="M3,7 H11 M3,10 H11" stroke="#aedcf5" stroke-width="0.8"/></svg>
<svg style="left:667.4px;top:139.89999999999998px;filter:blur(0.15px);" width="6.6" height="6.6" viewBox="0 0 14 14"><circle cx="7" cy="8" r="5.8" fill="#5fb7e8"/><path d="M3,6 Q5,8 4,10 M9,3.5 Q10,6 12,6.5" fill="none" stroke="#fff" stroke-width="1.1"/><rect x="7" y="0.5" width="5" height="4" fill="#e8553f"/><path d="M7,0.5 V7" stroke="#c04030" stroke-width="0.8"/></svg>
<svg style="left:667.4px;top:154.89999999999998px;filter:blur(0.15px);" width="6.6" height="6.6" viewBox="0 0 14 14"><circle cx="7" cy="7" r="6" fill="#555"/><circle cx="7" cy="7" r="3.5" fill="#333"/></svg>
<svg style="left:667.4px;top:169.89999999999998px;filter:blur(0.15px);" width="6.6" height="6.6" viewBox="0 0 14 14"><path d="M1,11 C1,8.5 3,7.5 4.5,8 C5,5.5 7.5,4 9.8,5 C11.5,5.8 12,7.5 12,8.5 C13,8.5 13.8,10 13.5,11 Z" fill="#f08a3a"/></svg>
<svg style="left:667.4px;top:184.89999999999998px;filter:blur(0.15px);" width="6.6" height="6.6" viewBox="0 0 14 14"><circle cx="4" cy="4" r="3" fill="#1f8fae"/><circle cx="10" cy="4" r="3" fill="#1f8fae"/><path d="M1,8 H13" stroke="#1f8fae" stroke-width="1.4"/><circle cx="4" cy="11" r="2.2" fill="none" stroke="#1f8fae" stroke-width="1.3"/><circle cx="10" cy="11" r="2.2" fill="none" stroke="#1f8fae" stroke-width="1.3"/></svg>
<svg style="left:667.4px;top:199.89999999999998px;filter:blur(0.15px);" width="6.6" height="6.6" viewBox="0 0 14 14"><circle cx="7" cy="7" r="6" fill="none" stroke="#3c8fc4" stroke-width="1.3"/><path d="M3,4.5 L5.2,11 L7,6.5 L8.8,11 L11,4.5" fill="none" stroke="#3c8fc4" stroke-width="1.5"/></svg>
<svg style="left:667.4px;top:214.89999999999998px;filter:blur(0.15px);" width="6.6" height="6.6" viewBox="0 0 14 14"><circle cx="7" cy="8" r="5.5" fill="#e8553f"/><circle cx="7" cy="7" r="4" fill="#f5f5f5"/><path d="M7,7 L9.5,4" stroke="#888" stroke-width="1"/><rect x="5" y="0.5" width="4" height="2" fill="#aaa"/></svg>
<svg style="left:667.4px;top:229.89999999999998px;filter:blur(0.15px);" width="6.6" height="6.6" viewBox="0 0 14 14"><rect x="0.5" y="2" width="13" height="10" fill="#c8d2da"/><path d="M2.5,11 A4.5,4.5 0 0 1 11.5,11" fill="#4a90c8"/><path d="M7,11 L10,6" stroke="#e8553f" stroke-width="1.3"/></svg>
<svg style="left:667.4px;top:244.89999999999998px;filter:blur(0.15px);" width="6.6" height="6.6" viewBox="0 0 14 14"><circle cx="7" cy="7" r="4.2" fill="none" stroke="#2f8a3f" stroke-width="2.6"/><circle cx="7" cy="7" r="5.8" fill="none" stroke="#2f8a3f" stroke-width="1.8" stroke-dasharray="1.8 1.2"/></svg>
<svg style="left:667.4px;top:259.9px;filter:blur(0.15px);" width="6.6" height="6.6" viewBox="0 0 14 14"><path d="M2,2 L7,7" stroke="#f4a02a" stroke-width="2.6"/><path d="M12,2 L7,7" stroke="#7ac143" stroke-width="2.6"/><path d="M2,12 L7,7" stroke="#5091cd" stroke-width="2.6"/><path d="M12,12 L7,7" stroke="#f44321" stroke-width="2.6"/></svg>
</body></html>
